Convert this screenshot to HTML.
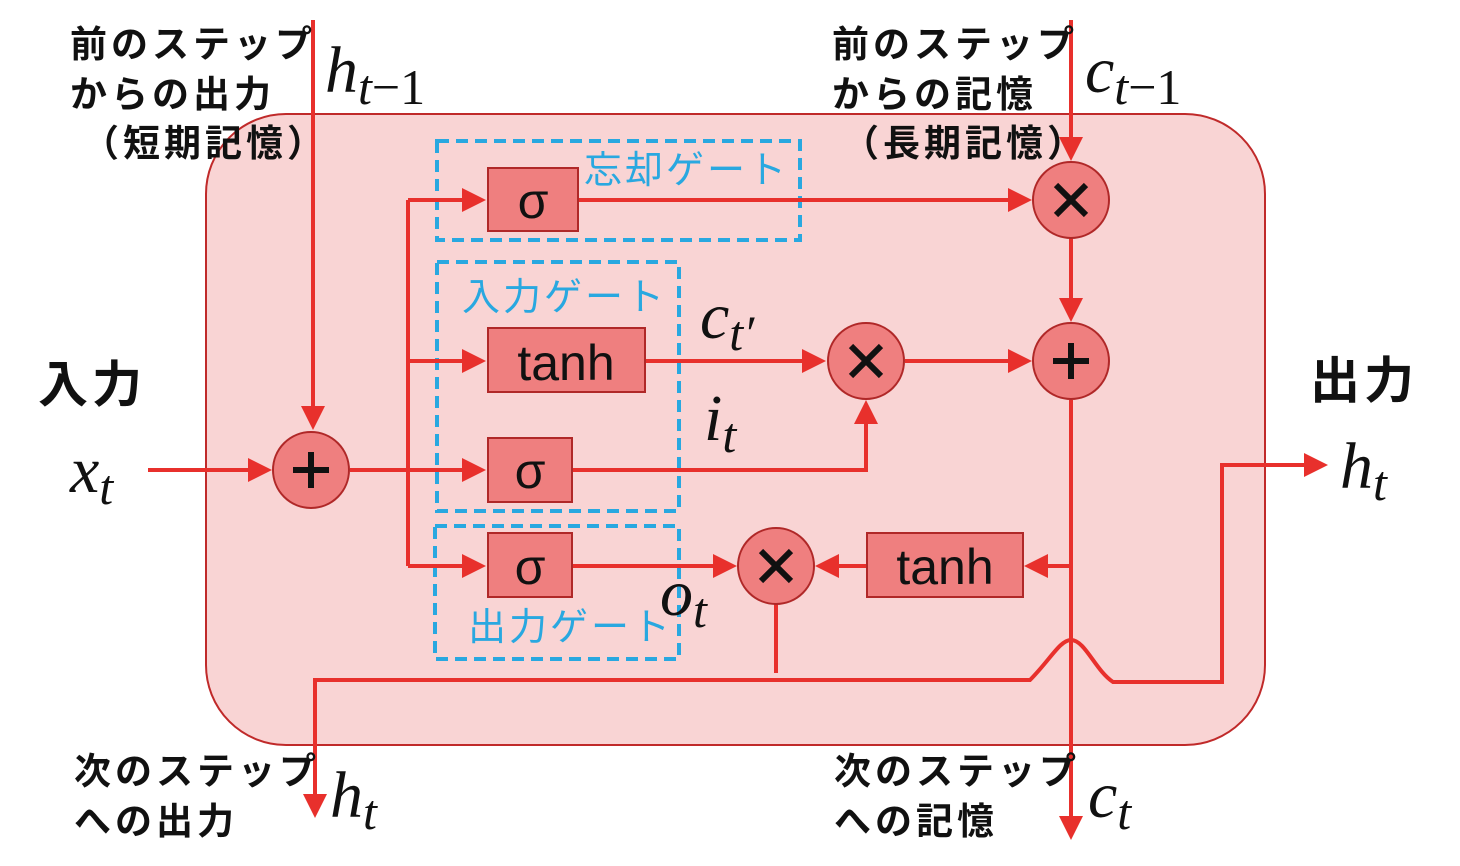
<!DOCTYPE html>
<html><head><meta charset="utf-8"><style>
html,body{margin:0;padding:0;background:#fff;}
svg{display:block}
.jp{font-family:"Liberation Sans","Noto Sans CJK JP",sans-serif;font-weight:bold;fill:#111;}
.bl{font-family:"Liberation Sans","Noto Sans CJK JP",sans-serif;fill:#29a8e0;}
.m{font-family:"Liberation Serif","DejaVu Serif",serif;font-style:italic;fill:#111;}
.bx{font-family:"Liberation Sans",sans-serif;fill:#111;}
</style></head><body>
<svg width="1460" height="866" viewBox="0 0 1460 866">
<defs>
<marker id="a" markerWidth="6" markerHeight="6" refX="5" refY="3" orient="auto" markerUnits="strokeWidth">
<path d="M0,0 L6,3 L0,6 z" fill="#e8302c"/></marker>
</defs>
<rect x="206" y="114" width="1059" height="631" rx="80" fill="#f9d4d4" stroke="#c02a2a" stroke-width="2"/>
<g fill="none" stroke="#29a8e0" stroke-width="4" stroke-dasharray="12,7">
<rect x="437" y="141" width="363" height="99"/>
<rect x="437" y="262" width="242" height="249"/>
<rect x="435" y="526" width="244" height="133"/>
</g>
<g fill="none" stroke="#e8302c" stroke-width="4">
<line x1="313" y1="20" x2="313" y2="426" marker-end="url(#a)"/>
<line x1="148" y1="470" x2="268" y2="470" marker-end="url(#a)"/>
<line x1="350" y1="470" x2="408" y2="470"/>
<line x1="408" y1="200" x2="408" y2="566"/>
<line x1="408" y1="200" x2="482" y2="200" marker-end="url(#a)"/>
<line x1="408" y1="361" x2="482" y2="361" marker-end="url(#a)"/>
<line x1="408" y1="470" x2="482" y2="470" marker-end="url(#a)"/>
<line x1="408" y1="566" x2="482" y2="566" marker-end="url(#a)"/>
<line x1="578" y1="200" x2="1028" y2="200" marker-end="url(#a)"/>
<line x1="1071" y1="20" x2="1071" y2="157" marker-end="url(#a)"/>
<line x1="1071" y1="238" x2="1071" y2="318" marker-end="url(#a)"/>
<line x1="645" y1="361" x2="822" y2="361" marker-end="url(#a)"/>
<polyline points="572,470 866,470 866,404" marker-end="url(#a)"/>
<line x1="905" y1="361" x2="1028" y2="361" marker-end="url(#a)"/>
<line x1="1071" y1="400" x2="1071" y2="836" marker-end="url(#a)"/>
<line x1="1071" y1="566" x2="1028" y2="566" marker-end="url(#a)"/>
<line x1="867" y1="566" x2="819" y2="566" marker-end="url(#a)"/>
<line x1="572" y1="566" x2="733" y2="566" marker-end="url(#a)"/>
<line x1="776" y1="604" x2="776" y2="673"/>
<path d="M315,680 L1030,680 C1050,660 1060,640 1071,640 C1085,640 1095,670 1113,682 L1222,682 L1222,465 L1324,465" marker-end="url(#a)"/>
<line x1="315" y1="678" x2="315" y2="814" marker-end="url(#a)"/>
</g>
<g fill="#ef7f7f" stroke="#b02828" stroke-width="2">
<circle cx="311" cy="470" r="38"/>
<circle cx="1071" cy="200" r="38"/>
<circle cx="1071" cy="361" r="38"/>
<circle cx="866" cy="361" r="38"/>
<circle cx="776" cy="566" r="38"/>
</g>
<g stroke="#111" stroke-width="6" stroke-linecap="butt">
<line x1="293" y1="470" x2="329" y2="470"/><line x1="311" y1="452" x2="311" y2="488"/>
<line x1="1053" y1="361" x2="1089" y2="361"/><line x1="1071" y1="343" x2="1071" y2="379"/>
<line x1="1056" y1="185" x2="1086" y2="215"/><line x1="1086" y1="185" x2="1056" y2="215"/>
<line x1="851" y1="346" x2="881" y2="376"/><line x1="881" y1="346" x2="851" y2="376"/>
<line x1="761" y1="551" x2="791" y2="581"/><line x1="791" y1="551" x2="761" y2="581"/>
</g>
<g fill="#ef7f7f" stroke="#b02828" stroke-width="2">
<rect x="488" y="168" width="90" height="63"/>
<rect x="488" y="328" width="157" height="64"/>
<rect x="488" y="438" width="84" height="64"/>
<rect x="488" y="533" width="84" height="64"/>
<rect x="867" y="533" width="156" height="64"/>
</g>
<g class="bx" font-size="50" text-anchor="middle">
<text x="533" y="218">σ</text>
<text x="566" y="380">tanh</text>
<text x="530" y="488">σ</text>
<text x="530" y="584">σ</text>
<text x="945" y="584">tanh</text>
</g>
<g class="bl" font-size="38" letter-spacing="3">
<text x="584" y="183">忘却ゲート</text>
<text x="462" y="310">入力ゲート</text>
<text x="468" y="640">出力ゲート</text>
</g>
<g class="jp" font-size="37" letter-spacing="4">
<text x="70" y="57">前のステップ</text>
<text x="70" y="107">からの出力</text>
<text x="82" y="156">（短期記憶）</text>
<text x="832" y="57">前のステップ</text>
<text x="832" y="107">からの記憶</text>
<text x="842" y="156">（長期記憶）</text>
<text x="74" y="784">次のステップ</text>
<text x="74" y="834">への出力</text>
<text x="834" y="784">次のステップ</text>
<text x="834" y="834">への記憶</text>
<text x="38" y="402" font-size="50">入力</text>
<text x="1310" y="398" font-size="50">出力</text>
</g>
<g class="m" font-size="66">
<text x="325" y="92">h<tspan font-size="50" dy="12">t</tspan><tspan font-size="50" font-style="normal">−1</tspan></text>
<text x="1085" y="92">c<tspan font-size="50" dy="12">t</tspan><tspan font-size="50" font-style="normal">−1</tspan></text>
<text x="70" y="492">x<tspan font-size="50" dy="12">t</tspan></text>
<text x="700" y="338">c<tspan font-size="50" dy="12">t′</tspan></text>
<text x="704" y="440">i<tspan font-size="50" dy="12">t</tspan></text>
<text x="660" y="615">o<tspan font-size="50" dy="12">t</tspan></text>
<text x="1340" y="488">h<tspan font-size="50" dy="12">t</tspan></text>
<text x="330" y="817">h<tspan font-size="50" dy="12">t</tspan></text>
<text x="1088" y="817">c<tspan font-size="50" dy="12">t</tspan></text>
</g>
</svg>
</body></html>
